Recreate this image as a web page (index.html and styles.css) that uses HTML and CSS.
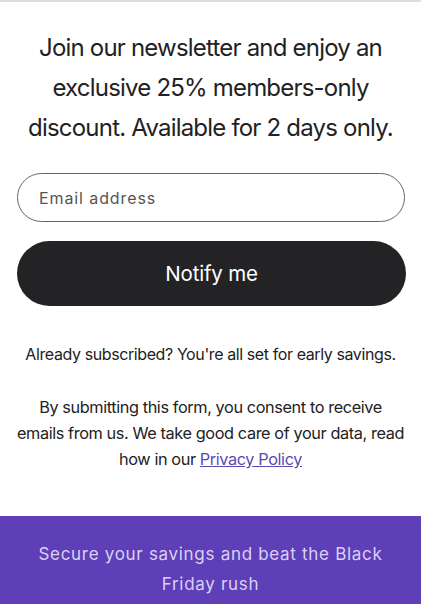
FILE: index.html
```html
<!DOCTYPE html>
<html lang="en">
<head>
  <meta charset="UTF-8">
  <title>Newsletter</title>
  <meta name="viewport" content="width=device-width, initial-scale=1.0">
  <link rel="stylesheet" href="styles.css">
</head>
<body>

<div class="topline"></div>

<div class="signup">
  <h2 class="headline">Join our newsletter and enjoy an exclusive 25% members-only discount. Available for 2 days only.</h2>

  <input type="email" class="email" placeholder="Email address">
  <button class="notify">Notify me</button>

  <p class="already">Already subscribed? You're all set for early savings.</p>

  <p class="consent">By submitting this form, you consent to receive emails from us. We take good care of your data, read how in our <a href="#">Privacy Policy</a></p>
</div>

<div class="banner">
  <p>Secure your savings and beat the Black Friday rush</p>
</div>

</body>
</html>
```

FILE: styles.css
```css
body {
  margin: 0;
  background-color: #fff;
  font-family: 'Inter', sans-serif;
  color: #222;
}
.topline {
  height: 2px;
  background-color: #dcdce2;
}
.signup {
  padding: 0 16px;
  text-align: center;
}
.headline {
  margin: 26px 0 25px;
  font-size: 24px;
  font-weight: 400;
  line-height: 40px;
  letter-spacing: -0.8px;
  color: #222;
}
.email {
  display: block;
  box-sizing: border-box;
  width: 388px;
  height: 49px;
  margin: 0 0 19px 1px;
  padding: 0 21px;
  border: 1px solid #666;
  border-radius: 25px;
  font-family: 'Inter', sans-serif;
  font-size: 16px;
  letter-spacing: 0.9px;
}
.email::placeholder {
  color: #555;
}
.notify {
  display: block;
  box-sizing: border-box;
  width: 389px;
  height: 65px;
  margin: 0 0 0 1px;
  border: none;
  border-radius: 33px;
  background-color: #232325;
  color: #fff;
  font-family: 'Inter', sans-serif;
  font-size: 20.5px;
  letter-spacing: -0.2px;
}
.already {
  margin: 35px -8px 0;
  font-size: 16px;
  letter-spacing: -0.4px;
  line-height: 26px;
}
.consent {
  margin: 27px 0 0;
  font-size: 16.3px;
  letter-spacing: -0.4px;
  line-height: 26px;
}
.consent a {
  color: #5b4bb0;
}
.banner {
  margin-top: 44px;
  padding: 23px 30px 20px;
  background-color: #5e3fb8;
  text-align: center;
}
.banner p {
  margin: 0;
  font-size: 17px;
  line-height: 30px;
  letter-spacing: 0.7px;
  color: #dcd0f6;
}
```
